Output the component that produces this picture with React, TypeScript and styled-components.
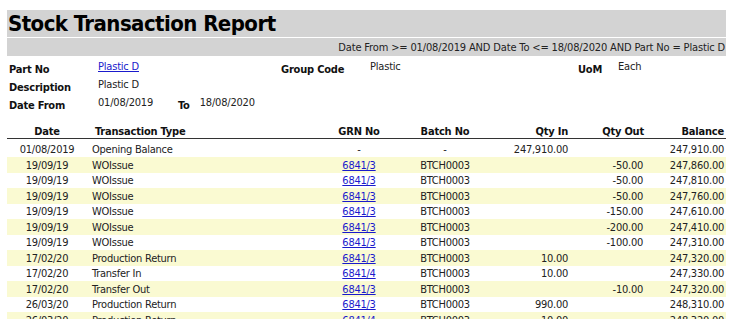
import React from "react";
import styled, { createGlobalStyle } from "styled-components";

const Global = createGlobalStyle`
  html, body { margin: 0; padding: 0; background: #fff; }
  body { font-family: "DejaVu Sans Condensed", "DejaVu Sans", sans-serif; color: #1a1a1a; }
`;

const Page = styled.div`
  width: 719px;
  padding: 10px 0 0 7px;
`;

const TitleBar = styled.div`
  height: 27px;
  background: #d3d3d3;
  display: flex;
  align-items: center;
  padding-left: 1px;
  font-size: 22px;
  font-weight: bold;
  color: #000;
  letter-spacing: -0.55px;
`;

const CriteriaBar = styled.div`
  height: 18px;
  margin-top: 1px;
  background: #d3d3d3;
  display: flex;
  align-items: center;
  justify-content: flex-end;
  padding-right: 1px;
  font-size: 11px;
  letter-spacing: -0.15px;
  color: #222;
`;

const Info = styled.div`
  display: grid;
  grid-template-columns: 89px 183px 89px 208px 40px 1fr;
  grid-auto-rows: 18px;
  padding: 3px 0 0 2px;
  font-size: 11px;
  letter-spacing: -0.2px;
`;

const Label = styled.div`
  font-weight: bold;
  padding-top: 4px;
  color: #111;
`;

const Value = styled.div`
  display: flex;
  align-items: flex-start;
  padding-top: 1px;
  color: #222;
`;

const Link = styled.a`
  color: #1a1acc;
  text-decoration: underline;
  cursor: pointer;
`;

const ToLabel = styled.span`
  font-weight: bold;
  margin: 3px 10px 0 25px;
  color: #111;
`;

const cols = "80px 231px 82px 90px 78px 76px 82px";

const HeadRow = styled.div`
  display: grid;
  grid-template-columns: ${cols};
  margin-top: 11px;
  height: 14px;
  align-items: center;
  border-bottom: 1.5px solid #333;
  font-size: 11px;
  font-weight: bold;
  letter-spacing: -0.2px;
  color: #111;
`;

const Body = styled.div`
  padding-top: 2.5px;
`;

const Row = styled.div<{ $alt: boolean }>`
  display: grid;
  grid-template-columns: ${cols};
  height: 15.5px;
  align-items: center;
  font-size: 11px;
  letter-spacing: -0.25px;
  background: ${(p) => (p.$alt ? "#fafad2" : "#fff")};
  color: #222;
`;

const Cell = styled.div<{ $align?: "left" | "center" | "right"; $pad?: number }>`
  text-align: ${(p) => p.$align || "left"};
  padding-left: ${(p) => (p.$align === "left" ? p.$pad ?? 0 : 0)}px;
  padding-right: ${(p) => (p.$align === "right" ? p.$pad ?? 0 : 0)}px;
  white-space: nowrap;
  padding-top: 1px;
`;

type Tx = {
  date: string;
  type: string;
  grn: string;
  batch: string;
  qin: string;
  qout: string;
  bal: string;
};

const rows: Tx[] = [
  { date: "01/08/2019", type: "Opening Balance", grn: "-", batch: "-", qin: "247,910.00", qout: "", bal: "247,910.00" },
  { date: "19/09/19", type: "WOIssue", grn: "6841/3", batch: "BTCH0003", qin: "", qout: "-50.00", bal: "247,860.00" },
  { date: "19/09/19", type: "WOIssue", grn: "6841/3", batch: "BTCH0003", qin: "", qout: "-50.00", bal: "247,810.00" },
  { date: "19/09/19", type: "WOIssue", grn: "6841/3", batch: "BTCH0003", qin: "", qout: "-50.00", bal: "247,760.00" },
  { date: "19/09/19", type: "WOIssue", grn: "6841/3", batch: "BTCH0003", qin: "", qout: "-150.00", bal: "247,610.00" },
  { date: "19/09/19", type: "WOIssue", grn: "6841/3", batch: "BTCH0003", qin: "", qout: "-200.00", bal: "247,410.00" },
  { date: "19/09/19", type: "WOIssue", grn: "6841/3", batch: "BTCH0003", qin: "", qout: "-100.00", bal: "247,310.00" },
  { date: "17/02/20", type: "Production Return", grn: "6841/3", batch: "BTCH0003", qin: "10.00", qout: "", bal: "247,320.00" },
  { date: "17/02/20", type: "Transfer In", grn: "6841/4", batch: "BTCH0003", qin: "10.00", qout: "", bal: "247,330.00" },
  { date: "17/02/20", type: "Transfer Out", grn: "6841/3", batch: "BTCH0003", qin: "", qout: "-10.00", bal: "247,320.00" },
  { date: "26/03/20", type: "Production Return", grn: "6841/3", batch: "BTCH0003", qin: "990.00", qout: "", bal: "248,310.00" },
  { date: "26/03/20", type: "Production Return", grn: "6841/4", batch: "BTCH0003", qin: "10.00", qout: "", bal: "248,320.00" },
];

export default function App() {
  return (
    <Page>
      <Global />
      <TitleBar>Stock Transaction Report</TitleBar>
      <CriteriaBar>
        Date From &gt;= 01/08/2019 AND Date To &lt;= 18/08/2020 AND Part No = Plastic D
      </CriteriaBar>
      <Info>
        <Label>Part No</Label>
        <Value>
          <Link>Plastic D</Link>
        </Value>
        <Label>Group Code</Label>
        <Value>Plastic</Value>
        <Label>UoM</Label>
        <Value>Each</Value>
        <Label>Description</Label>
        <Value>Plastic D</Value>
        <div />
        <div />
        <div />
        <div />
        <Label>Date From</Label>
        <Value>
          01/08/2019<ToLabel>To</ToLabel>18/08/2020
        </Value>
      </Info>
      <HeadRow>
        <Cell $align="center">Date</Cell>
        <Cell $align="left" $pad={8}>Transaction Type</Cell>
        <Cell $align="center">GRN No</Cell>
        <Cell $align="center">Batch No</Cell>
        <Cell $align="right">Qty In</Cell>
        <Cell $align="right">Qty Out</Cell>
        <Cell $align="right" $pad={2}>Balance</Cell>
      </HeadRow>
      <Body>
        {rows.map((r, i) => (
          <Row key={i} $alt={i % 2 === 1}>
            <Cell $align="center">{r.date}</Cell>
            <Cell $align="left" $pad={5}>{r.type}</Cell>
            <Cell $align="center">{r.grn === "-" ? r.grn : <Link>{r.grn}</Link>}</Cell>
            <Cell $align="center">{r.batch}</Cell>
            <Cell $align="right">{r.qin}</Cell>
            <Cell $align="right" $pad={1}>{r.qout}</Cell>
            <Cell $align="right" $pad={2}>{r.bal}</Cell>
          </Row>
        ))}
      </Body>
    </Page>
  );
}
